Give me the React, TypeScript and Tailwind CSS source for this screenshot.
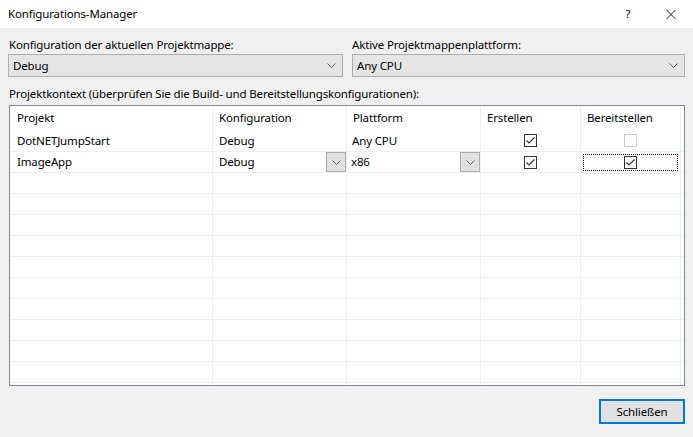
import React from 'react';

const font = { fontFamily: '"Noto Sans", "Open Sans", sans-serif' };

function Chevron({ className = '' }: { className?: string }) {
  return (
    <svg width="9" height="5" viewBox="0 0 9 5" className={className}>
      <polyline points="0.5,0.5 4.5,4.5 8.5,0.5" fill="none" stroke="#606060" strokeWidth="1" />
    </svg>
  );
}

function Combo({ value }: { value: string }) {
  return (
    <div className="flex h-[23px] items-center justify-between border border-[#adadad] bg-[#e5e5e5] pl-[4px] pr-[6px]">
      <span>{value}</span>
      <Chevron />
    </div>
  );
}

function CheckBox({ checked, disabled }: { checked: boolean; disabled?: boolean }) {
  return (
    <svg width="13" height="13" viewBox="0 0 13 13">
      <rect x="0.5" y="0.5" width="12" height="12" fill="white" stroke={disabled ? '#cccccc' : '#333333'} />
      {checked && <polyline points="2.5,6.5 5,9 10.5,3.5" fill="none" stroke="#333333" strokeWidth="1.2" />}
    </svg>
  );
}

function CellDrop() {
  return (
    <div className="flex h-[20px] w-[20px] items-center justify-center border border-[#adadad] bg-[#e1e1e1]">
      <Chevron />
    </div>
  );
}

const widths = ['w-[203px]', 'w-[134px]', 'w-[134px]', 'w-[100px]', 'w-[100px]'];

export default function App() {
  const emptyRows = Array.from({ length: 11 });

  return (
    <div
      className="flex h-[437px] w-[693px] flex-col bg-[#f0f0f0] text-[11.5px] tracking-[-0.15px] text-black"
      style={font}
    >
      {/* Title bar */}
      <div className="flex h-[28px] items-center bg-white pl-[8px]">
        <span className="flex-1">Konfigurations-Manager</span>
        <span className="w-[12px] text-center">?</span>
        <div className="ml-[32px] mr-[17px] flex h-[10px] w-[10px] items-center justify-center">
          <svg width="11" height="11" viewBox="0 0 11 11">
            <path d="M0.5 0.5 L10.5 10.5 M10.5 0.5 L0.5 10.5" stroke="#000" strokeWidth="1" />
          </svg>
        </div>
      </div>

      <div className="flex flex-1 flex-col pl-[8px] pr-[8px]">
        {/* Selectors */}
        <div className="mt-[9px] grid grid-cols-[335px_333px] gap-x-[9px]">
          <div className="flex flex-col gap-[1px]">
            <span className="h-[16px] leading-[16px] pl-[1px]">Konfiguration der aktuellen Projektmappe:</span>
            <Combo value="Debug" />
          </div>
          <div className="flex flex-col gap-[1px]">
            <span className="h-[16px] leading-[16px]">Aktive Projektmappenplattform:</span>
            <Combo value="Any CPU" />
          </div>
        </div>

        <span className="mt-[9px] h-[16px] leading-[16px] pl-[1px]">
          Projektkontext (überprüfen Sie die Build- und Bereitstellungskonfigurationen):
        </span>

        {/* Table */}
        <div className="ml-[1px] mt-[3px] h-[281px] w-[676px] overflow-hidden border border-[#828790] bg-white">
          <div className="flex h-[24px]">
            {['Projekt', 'Konfiguration', 'Plattform', 'Erstellen', 'Bereitstellen'].map((h, i) => (
              <div
                key={h}
                className={`${widths[i]} flex items-center border-r border-[#eceff3] ${i === 0 ? 'pl-[7px]' : 'pl-[6px]'}`}
              >
                {h}
              </div>
            ))}
          </div>

          {/* Row 1 */}
          <div className="flex h-[22px] border-b border-[#eceff3]">
            <div className="flex w-[203px] items-center border-r border-[#eceff3] pl-[7px]">DotNETJumpStart</div>
            <div className="flex w-[134px] items-center border-r border-[#eceff3] pl-[6px]">Debug</div>
            <div className="flex w-[134px] items-center border-r border-[#eceff3] pl-[5px]">Any CPU</div>
            <div className="flex w-[100px] items-center justify-center border-r border-[#eceff3]">
              <CheckBox checked />
            </div>
            <div className="flex w-[100px] items-center justify-center border-r border-[#eceff3]">
              <CheckBox checked={false} disabled />
            </div>
          </div>

          {/* Row 2 */}
          <div className="flex h-[21px] border-b border-[#eceff3]">
            <div className="flex w-[203px] items-center border-r border-[#eceff3] pl-[7px]">ImageApp</div>
            <div className="flex w-[134px] items-center justify-between border-r border-[#eceff3] pl-[6px]">
              <span>Debug</span>
              <CellDrop />
            </div>
            <div className="flex w-[134px] items-center justify-between border-r border-[#eceff3] pl-[4px]">
              <span>x86</span>
              <CellDrop />
            </div>
            <div className="flex w-[100px] items-center justify-center border-r border-[#eceff3]">
              <CheckBox checked />
            </div>
            <div className="flex w-[100px] items-center border-r border-[#eceff3] px-[2px]">
              <div className="flex h-[17px] flex-1 items-center justify-center border border-dotted border-black">
                <CheckBox checked />
              </div>
            </div>
          </div>

          {emptyRows.map((_, r) => (
            <div key={r} className="flex h-[21px] border-b border-[#eceff3]">
              {widths.map((w, i) => (
                <div key={i} className={`${w} border-r border-[#eceff3]`} />
              ))}
            </div>
          ))}
        </div>

        {/* Footer */}
        <div className="mt-[13px] flex justify-end">
          <button className="h-[25px] w-[86px] border-2 border-[#0078d7] bg-[#e1e1e1]">
            Schließen
          </button>
        </div>
      </div>
    </div>
  );
}
